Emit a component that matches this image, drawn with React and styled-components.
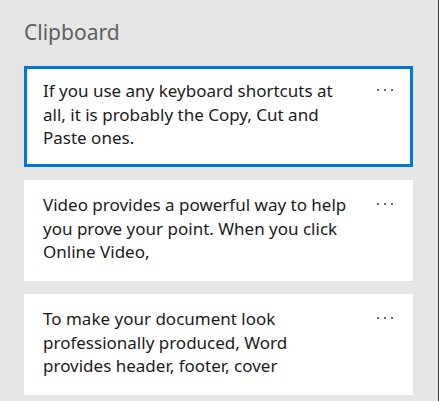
import React from "react";
import styled, { createGlobalStyle } from "styled-components";

const GlobalStyle = createGlobalStyle`
  html, body { margin: 0; padding: 0; background: #e6e6e6; }
  body { font-family: "Noto Sans", "Open Sans", sans-serif; }
`;

const Panel = styled.div`
  box-sizing: border-box;
  width: 439px;
  height: 401px;
  background: #e6e6e6;
  border-right: 1px solid #333333;
  padding: 15px 25px 0 24px;
  overflow: hidden;
  display: flex;
  flex-direction: column;
`;

const Title = styled.h1`
  margin: 0 0 17px 0;
  font-size: 21px;
  font-weight: 400;
  line-height: 34px;
  color: #5f5f5f;
`;

const List = styled.div`
  display: flex;
  flex-direction: column;
  gap: 13px;
`;

const Card = styled.div`
  box-sizing: border-box;
  height: 101px;
  background: #ffffff;
  border: 3px solid ${(p) => (p.$selected ? "#0078d7" : "transparent")};
  padding: 10px 16px 0 16px;
  display: flex;
  align-items: flex-start;
  justify-content: space-between;
`;

const CardText = styled.p`
  margin: 0;
  width: 314px;
  font-size: 17px;
  line-height: 23.5px;
  color: #1b1b1b;
`;

const MoreButton = styled.button`
  border: none;
  background: none;
  padding: 0;
  margin-top: 9px;
  width: 18px;
  height: 4px;
  display: flex;
  align-items: center;
  cursor: pointer;
`;

const Dots = () => (
  <svg width="18" height="4" viewBox="0 0 18 4">
    <rect x="1" y="1" width="2" height="2" fill="#6b6b6b" />
    <rect x="8" y="1" width="2" height="2" fill="#6b6b6b" />
    <rect x="15" y="1" width="2" height="2" fill="#6b6b6b" />
  </svg>
);

const items = [
  "If you use any keyboard shortcuts at all, it is probably the Copy, Cut and Paste ones.",
  "Video provides a powerful way to help you prove your point. When you click Online Video,",
  "To make your document look professionally produced, Word provides header, footer, cover",
];

export default function App() {
  return (
    <>
      <GlobalStyle />
      <Panel>
        <Title>Clipboard</Title>
        <List>
          {items.map((t, i) => (
            <Card key={i} $selected={i === 0}>
              <CardText>{t}</CardText>
              <MoreButton aria-label="More options">
                <Dots />
              </MoreButton>
            </Card>
          ))}
        </List>
      </Panel>
    </>
  );
}
